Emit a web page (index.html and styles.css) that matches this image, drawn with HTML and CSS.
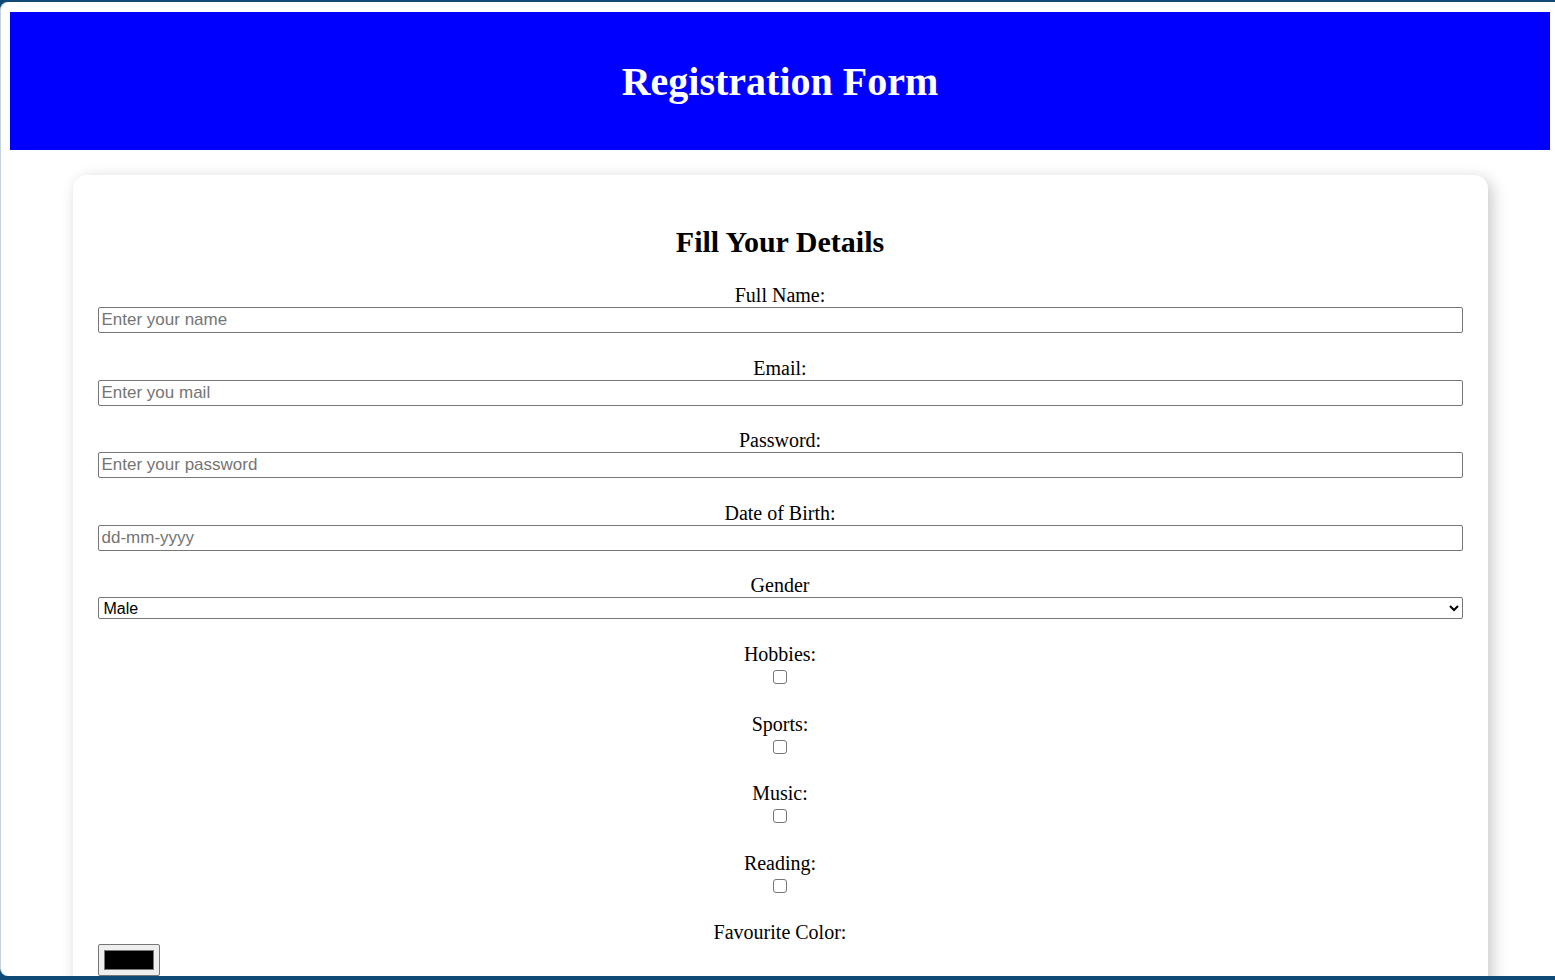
FILE: index.html
```html
<!DOCTYPE html>
<html lang="en">
<head>
<meta charset="utf-8">
<title>Registration Form</title>
<link rel="stylesheet" href="styles.css">
</head>
<body>
<div class="window">
  <header class="banner">
    <h1 class="banner-title">Registration Form</h1>
  </header>
  <main class="card">
    <h2 class="card-title">Fill Your Details</h2>
    <form class="form">
      <div class="field">
        <label class="field-label" for="name">Full Name:</label>
        <input class="text-input" id="name" type="text" placeholder="Enter your name">
      </div>
      <div class="field">
        <label class="field-label" for="email">Email:</label>
        <input class="text-input" id="email" type="email" placeholder="Enter you mail">
      </div>
      <div class="field">
        <label class="field-label" for="password">Password:</label>
        <input class="text-input" id="password" type="password" placeholder="Enter your password">
      </div>
      <div class="field">
        <label class="field-label" for="dob">Date of Birth:</label>
        <input class="text-input" id="dob" type="text" placeholder="dd-mm-yyyy">
      </div>
      <div class="field field-select">
        <label class="field-label" for="gender">Gender</label>
        <select class="select-input" id="gender">
          <option>Male</option>
          <option>Female</option>
          <option>Other</option>
        </select>
      </div>
      <div class="field field-check">
        <label class="field-label" for="hobbies">Hobbies:</label>
        <div class="check-row"><input class="check" id="hobbies" type="checkbox"></div>
      </div>
      <div class="field field-check">
        <label class="field-label" for="sports">Sports:</label>
        <div class="check-row"><input class="check" id="sports" type="checkbox"></div>
      </div>
      <div class="field field-check">
        <label class="field-label" for="music">Music:</label>
        <div class="check-row"><input class="check" id="music" type="checkbox"></div>
      </div>
      <div class="field field-check">
        <label class="field-label" for="reading">Reading:</label>
        <div class="check-row"><input class="check" id="reading" type="checkbox"></div>
      </div>
      <div class="field">
        <label class="field-label" for="color">Favourite Color:</label>
        <input class="color-input" id="color" type="color" value="#000000">
      </div>
    </form>
  </main>
</div>
</body>
</html>
```

FILE: styles.css
```css
html, body {
  margin: 0;
  padding: 0;
  height: 980px;
  overflow: hidden;
  background: #0f4a74;
}

.window {
  box-sizing: border-box;
  height: 974px;
  margin-top: 2px;
  background: #ffffff;
  border-left: 1px solid #c6d4df;
  border-radius: 8px 0 0 8px;
  overflow: hidden;
  padding: 10px 5px 0 9px;
  font-family: "Liberation Serif", "Times New Roman", serif;
  font-size: 20px;
  color: #000;
}

.banner {
  height: 138px;
  background: #0000ff;
  display: flex;
  align-items: center;
  justify-content: center;
}

.banner-title {
  margin: 0;
  color: #ffffff;
  font-size: 40px;
  font-weight: bold;
  line-height: 46px;
  padding-top: 1px;
}

.card {
  width: 1415px;
  box-sizing: border-box;
  margin: 25px auto 0;
  padding: 25px 25px 40px;
  background: #ffffff;
  border-radius: 14px;
  box-shadow: 4px 4px 16px rgba(0, 0, 0, 0.22);
}

.card-title {
  margin: 25px 0 24.5px;
  font-size: 30px;
  font-weight: bold;
  text-align: center;
  line-height: 34.5px;
}

.form {
  display: flex;
  flex-direction: column;
}

.field {
  display: flex;
  flex-direction: column;
  margin-bottom: 23.5px;
}

.field-label {
  display: block;
  text-align: center;
  line-height: 23px;
  height: 23px;
}

.text-input {
  box-sizing: border-box;
  width: 100%;
  height: 26px;
  margin: 0;
  padding: 0 3px;
  border: 1px solid #767676;
  border-radius: 2px;
  font-family: "Liberation Sans", Arial, sans-serif;
  font-size: 17px;
  color: #000;
  background: #fff;
}

.text-input::placeholder {
  color: #757575;
}

.select-input {
  box-sizing: border-box;
  width: 100%;
  height: 22px;
  margin: 0;
  padding: 0 1px;
  border: 1px solid #767676;
  border-radius: 2px;
  font-family: "Liberation Sans", Arial, sans-serif;
  font-size: 16px;
  color: #000;
  background: #fff;
}

.field-select {
  margin-bottom: 24px;
}

.check-row {
  height: 23px;
  display: flex;
  justify-content: center;
  align-items: flex-start;
}

.check {
  appearance: none;
  -webkit-appearance: none;
  box-sizing: border-box;
  width: 14px;
  height: 14px;
  margin: 4px 0 0;
  border: 1px solid #767676;
  border-radius: 3px;
  background: #ffffff;
}

.color-input {
  box-sizing: border-box;
  width: 62px;
  height: 32px;
  margin: 0;
  padding: 0;
  border: 1px solid #767676;
  border-radius: 2px;
  background: #efefef;
}

.color-input::-webkit-color-swatch-wrapper {
  padding: 5px;
}

.color-input::-webkit-color-swatch {
  border: 1px solid #777777;
}
```
